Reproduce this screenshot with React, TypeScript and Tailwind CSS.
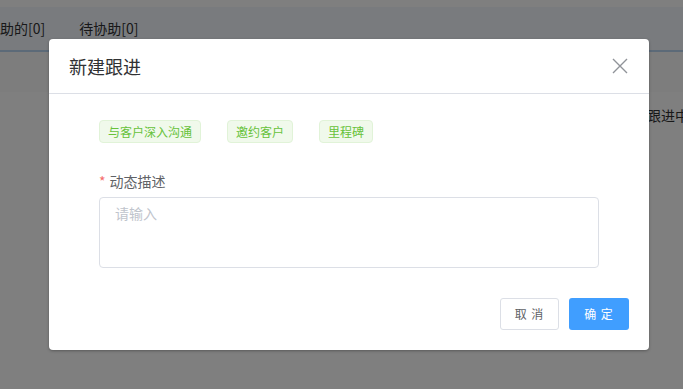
import { useState } from "react";

const TAGS = ["与客户深入沟通", "邀约客户", "里程碑"];

const App = () => {
  const [text, setText] = useState("");

  return (
    <div
      className="relative w-[683px] h-[389px] overflow-hidden bg-white text-[#303133]"
      style={{ fontFamily: '"Noto Sans CJK SC", "Liberation Sans", sans-serif' }}
    >
      {/* page behind the dialog */}
      <div className="h-[7px] bg-white"></div>
      <div className="h-[43px] bg-[#f3f7fc] flex items-center text-[14px] whitespace-nowrap">
        <span className="ml-[-14px]">协助的[0]</span>
        <span className="ml-[34px]">待协助[0]</span>
      </div>
      <div className="h-[2px] bg-[#b9d4f0]"></div>
      <div className="h-[41px] bg-[#fbfbfb] border-b border-[#ffffff]"></div>
      <div className="h-[44px] flex items-center pl-[647px] whitespace-nowrap text-[14px]">
        跟进中
      </div>

      {/* overlay */}
      <div className="absolute inset-0 bg-black/50 pt-[39px] pl-[49px]">
        <div className="w-[600px] h-[311px] bg-white rounded-[4px] shadow-[0_1px_3px_rgba(0,0,0,0.3)]">
          <div className="h-[55px] px-[20px] flex items-center justify-between border-b border-[#dcdfe6]">
            <span className="text-[18px] text-[#303133] leading-none">新建跟进</span>
            <svg width="16" height="16" viewBox="0 0 16 16" className="mr-[1px]">
              <path d="M1 1L15 15M15 1L1 15" stroke="#909399" strokeWidth="1.4" fill="none" />
            </svg>
          </div>

          <div className="pl-[50px] pr-[51px] pt-[26px]">
            <div className="flex gap-[26px]">
              {TAGS.map((t) => (
                <span
                  key={t}
                  className="h-[23px] px-[8px] flex items-center text-[12px] text-[#67c23a] bg-[#f0f9eb] border border-[#e1f3d8] rounded-[4px]"
                >
                  {t}
                </span>
              ))}
            </div>

            <div className="mt-[28px] h-[20px] leading-[20px] text-[14px] text-[#606266] flex">
              <span className="text-[#f56c6c] mr-[4px]">*</span>
              <span>动态描述</span>
            </div>

            <textarea
              value={text}
              onChange={(e) => setText(e.target.value)}
              placeholder="请输入"
              className="mt-[6px] block w-[500px] h-[71px] resize-none border border-[#dcdfe6] rounded-[4px] px-[15px] py-[5px] text-[14px] leading-[21px] text-[#606266] placeholder:text-[#c0c4cc] outline-none"
            />
          </div>

          <div className="flex justify-end gap-[10px] px-[20px] mt-[30px]">
            <button className="w-[59px] h-[32px] border border-[#dcdfe6] rounded-[3px] text-[12px] text-[#606266] bg-white tracking-[1px]">
              取 消
            </button>
            <button className="w-[60px] h-[32px] rounded-[3px] text-[12px] text-white bg-[#409eff] tracking-[1px]">
              确 定
            </button>
          </div>
        </div>
      </div>
    </div>
  );
};

export default App;
